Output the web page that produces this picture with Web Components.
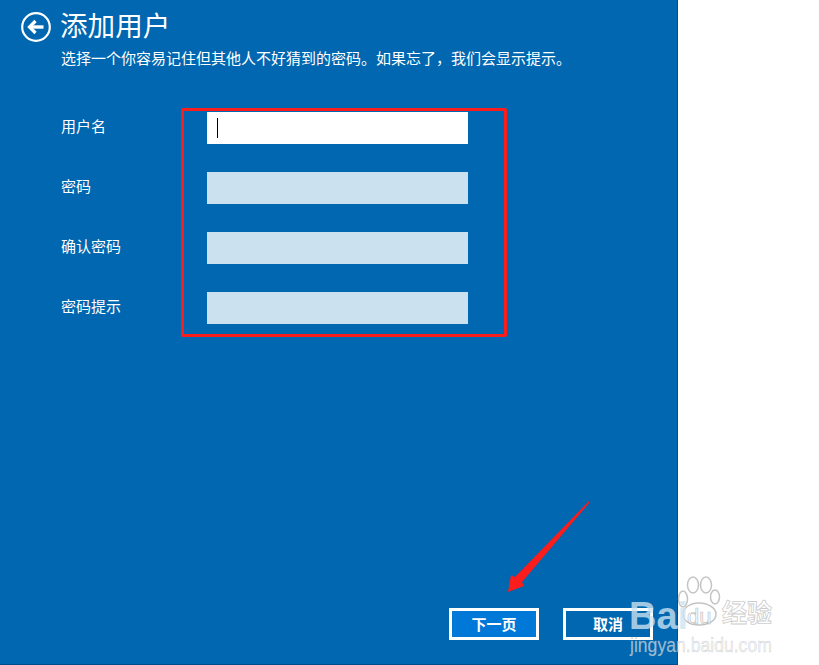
<!DOCTYPE html>
<html lang="zh"><head><meta charset="utf-8"><title>添加用户</title>
<style>
html,body{margin:0;padding:0;background:#fff;height:100%}
body{font-family:"Noto Sans CJK SC","Liberation Sans",sans-serif;overflow:hidden;width:819px;height:665px;position:relative}
</style></head><body>
<add-user-panel>
  <page-header slot="header" title-text="添加用户">选择一个你容易记住但其他人不好猜到的密码。如果忘了，我们会显示提示。</page-header>
  <form-row label="用户名" active></form-row>
  <form-row label="密码"></form-row>
  <form-row label="确认密码"></form-row>
  <form-row label="密码提示"></form-row>
  <win-button slot="footer" primary>下一页</win-button>
  <win-button slot="footer">取消</win-button>
</add-user-panel>
<red-annotations></red-annotations>
<baidu-mark></baidu-mark>
<script>
function def(name, html, init){
  customElements.define(name, class extends HTMLElement{
    constructor(){super();this.attachShadow({mode:'open'}).innerHTML=html;}
    connectedCallback(){ if(init) init(this); }
  });
}
def('add-user-panel',`<style>
:host{display:flex;flex-direction:column;box-sizing:border-box;width:678px;height:665px;background:#0067b0;color:#fff;border-right:1px solid #004e8c;border-bottom:1px solid #004e8c}
.form{display:flex;flex-direction:column;gap:28px;margin-top:43px;padding-left:61px}
.foot{margin-top:auto;display:flex;justify-content:flex-end;gap:24px;padding:0 24px 24px 0}
</style><slot name="header"></slot><div class="form"><slot></slot></div><div class="foot"><slot name="footer"></slot></div>`);
def('page-header',`<style>
:host{display:flex;gap:10px;padding:7px 0 0 21px;align-items:flex-start}
svg{display:block;margin-top:5px;flex:none}
h1{font:400 27.6px/34px "Noto Sans CJK SC",sans-serif;margin:0 0 0 -1px}
p{font:400 15px/22px "Noto Sans CJK SC",sans-serif;margin:6px 0 0}
</style>
<svg width="30" height="30" viewBox="0 0 30 30" fill="none" stroke="#fff"><circle cx="15" cy="15" r="13.8" stroke-width="2.2"/><path d="M22.5 15H9.5" stroke-width="3.4"/><path d="M14.5 9L8.5 15L14.5 21" stroke-width="3.2"/></svg>
<div><h1 id="t"></h1><p><slot></slot></p></div>`,el=>{el.shadowRoot.getElementById('t').textContent=el.getAttribute('title-text')});
def('form-row',`<style>
:host{display:grid;grid-template-columns:146px 261px;align-items:center;height:32px;font:400 15px/22px "Noto Sans CJK SC",sans-serif}
#l{padding-bottom:4px}
.i{height:32px;background:#cbe1ef;position:relative}
:host([active]) .i{background:#fff}
:host([active]) .i::after{content:"";position:absolute;left:10px;top:6px;width:1px;height:20px;background:#000}
</style><span id="l"></span><div class="i"></div>`,el=>{el.shadowRoot.getElementById('l').textContent=el.getAttribute('label')});
def('win-button',`<style>
:host{display:flex;align-items:center;justify-content:center;box-sizing:border-box;width:90px;height:32px;padding-bottom:2px;border:3px solid #fff;font:700 15px/1 "Noto Sans CJK SC",sans-serif;color:#fff}
:host([primary]){background:#0078d7}
</style><slot></slot>`);
def('red-annotations',`<style>
:host{display:block;position:absolute;left:0;top:0;width:819px;height:665px;pointer-events:none}
.box{position:absolute;left:181px;top:108px;width:326px;height:229px;box-sizing:border-box;border:3px solid #fb1c1c;border-radius:2px}
svg{position:absolute;left:0;top:0}
</style><div class="box"></div>
<svg width="819" height="665"><polygon fill="#fb1c1c" points="589,501 590,502 522,582 524,586 508,592 511,575 515,577"/></svg>`);
def('baidu-mark',`<style>
:host{display:block;position:absolute;left:625px;top:570px;width:160px;height:92px;pointer-events:none}
span{position:absolute;white-space:nowrap;color:rgba(255,255,255,.68);-webkit-text-stroke:.8px rgba(160,160,160,.55)}
.b{left:4px;top:24px;font:700 38px/44px "Liberation Sans",sans-serif;color:rgba(205,228,242,.78);-webkit-text-stroke:0}
.d{left:62px;top:35px;font:400 22px/24px "Liberation Sans",sans-serif;color:rgba(255,255,255,.8);-webkit-text-stroke:.7px rgba(160,160,160,.7)}
.j{left:97px;top:25px;font:700 25px/32px "Noto Sans CJK SC",sans-serif}
.u{left:5px;top:63px;font:400 20px/24px "Liberation Sans",sans-serif;transform:scaleX(.88);transform-origin:0 50%;color:rgba(235,240,245,.66);-webkit-text-stroke:.5px rgba(160,160,160,.45)}
svg{position:absolute;left:52px;top:6px}
</style>
<svg width="44" height="50" viewBox="0 0 44 50" fill="rgba(255,255,255,.2)" stroke="rgba(165,165,165,.65)" stroke-width="1.5">
<ellipse cx="6" cy="23" rx="4.5" ry="8"/><ellipse cx="16" cy="9" rx="5.5" ry="8"/><ellipse cx="29" cy="9" rx="5.5" ry="8"/><ellipse cx="38" cy="21" rx="4.5" ry="7"/>
<path d="M22 27C13 27 6 32 6 38C6 45 13 49 22 49C31 49 39 45 39 38C39 32 31 27 22 27Z"/></svg>
<span class="b">Bai</span><span class="d">du</span><span class="j">经验</span><span class="u">jingyan.baidu.com</span>`);
</script>
</body></html>
